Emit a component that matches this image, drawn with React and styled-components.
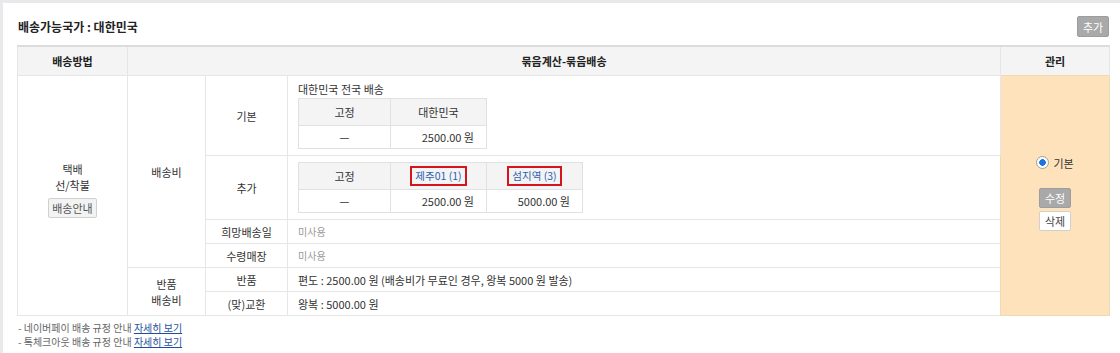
import React from "react"
import styled, { createGlobalStyle } from "styled-components"

const GlobalStyle = createGlobalStyle`
  html, body {
    margin: 0;
    padding: 0;
    background: #e8e9eb;
  }
  body {
    font-family: "Noto Sans CJK KR", "Noto Sans", sans-serif;
    font-size: 11px;
    color: #333;
  }
`

const Page = styled.div`
  padding: 3px 0 0 3px;
  background: #e8e9eb;
`

const Panel = styled.div`
  background: #fff;
  padding: 13px 11px 12px 14px;
  min-height: 330px;
`

const TopBar = styled.div`
  display: flex;
  justify-content: space-between;
  align-items: center;
  height: 21px;
  margin-bottom: 8px;
`

const Title = styled.h3`
  margin: 0;
  padding-left: 1px;
  font-size: 12px;
  font-weight: 700;
  color: #222;
`

const GrayButton = styled.button`
  width: 32px;
  height: ${(p) => p.h || 21}px;
  padding: 0;
  border: 1px solid #9d9d9d;
  border-radius: 2px;
  background: #a9a9a9;
  color: #fff;
  font-family: inherit;
  font-size: 11px;
`

const WhiteButton = styled.button`
  width: ${(p) => p.w || 32}px;
  height: 20px;
  margin-top: ${(p) => p.mt || 0}px;
  padding: 0;
  border: 1px solid #d0d0d0;
  border-radius: 2px;
  background: ${(p) => p.bg || "#fff"};
  color: ${(p) => p.fg || "#444"};
  font-family: inherit;
  font-size: 11px;
`

const Table = styled.table`
  width: 1092px;
  border-collapse: collapse;
  table-layout: fixed;
  border-top: 2px solid #dcdcdc;
  border-bottom: 1px solid #dcdcdc;
`

const Th = styled.th`
  height: 28px;
  padding: 0;
  background: #f4f4f4;
  border-left: 1px solid #e6e6e6;
  border-right: 1px solid #e6e6e6;
  font-weight: 700;
  color: #222;
  font-size: 11px;
  text-align: center;
`

const Td = styled.td`
  height: 23px;
  padding: ${(p) => (p.left ? "0 10px" : "0")};
  padding-bottom: ${(p) => p.pb || 0}px;
  border: 1px solid #e6e6e6;
  text-align: ${(p) => (p.left ? "left" : "center")};
  vertical-align: middle;
  line-height: 16px;
  color: ${(p) => (p.muted ? "#999" : "#333")};
  font-size: ${(p) => (p.muted ? "10px" : "11px")};
`

const ManageCell = styled.td`
  padding: 0 0 6px;
  border: 1px solid #f2d9b5;
  background: #fee2bb;
  text-align: center;
  vertical-align: middle;
`

const ContentCell = styled.td`
  padding: 6px 10px;
  border: 1px solid #e6e6e6;
  vertical-align: top;
  line-height: 14px;
`

const Caption = styled.div`
  margin: 0 0 2px;
  color: #333;
`

const InnerTable = styled.table`
  border-collapse: collapse;
  table-layout: fixed;
  border: 1px solid #dcdcdc;
`

const InnerTh = styled.th`
  height: 26px;
  padding: 0;
  background: #f4f4f4;
  border: 1px solid #e1e1e1;
  font-weight: 400;
  color: #333;
  text-align: center;
  line-height: 16px;
`

const InnerTd = styled.td`
  height: 22px;
  padding: ${(p) => (p.num ? "0 12px 0 0" : "0")};
  border: 1px solid #e1e1e1;
  text-align: ${(p) => (p.num ? "right" : "center")};
`

const MarkedLink = styled.span`
  display: inline-block;
  vertical-align: middle;
  padding: 0 3px;
  line-height: 16px;
  font-size: 10.5px;
  border: 2px solid #d6141d;
  color: #2b5fb3;
`

const StackLines = styled.div`
  line-height: 16px;
  color: #333;
`

const ManageBox = styled.div`
  display: flex;
  flex-direction: column;
  align-items: center;
`

const RadioLabel = styled.label`
  display: flex;
  align-items: center;
  gap: 4px;
  margin-bottom: 17px;
  color: #333;
`

const RadioDot = styled.span`
  width: 11px;
  height: 11px;
  border-radius: 50%;
  border: 1px solid #a0a0a0;
  background: radial-gradient(circle, #1d74e0 0 3px, #fff 3.6px);
`

const ButtonStack = styled.div`
  display: flex;
  flex-direction: column;
  gap: 3px;
`

const Notes = styled.div`
  margin-top: 5px;
  padding-left: 1px;
  line-height: 14px;
  font-size: 10px;
  color: #666;
`

const NoteLink = styled.a`
  color: #1f4f9e;
  text-decoration: underline;
`

export default function App() {
  return (
    <Page>
      <GlobalStyle />
      <Panel>
        <TopBar>
          <Title>배송가능국가 : 대한민국</Title>
          <GrayButton>추가</GrayButton>
        </TopBar>

        <Table>
          <colgroup>
            <col style={{ width: 110 }} />
            <col style={{ width: 78 }} />
            <col style={{ width: 82 }} />
            <col style={{ width: 713 }} />
            <col style={{ width: 109 }} />
          </colgroup>
          <thead>
            <tr>
              <Th>배송방법</Th>
              <Th colSpan={3}>묶음계산-묶음배송</Th>
              <Th>관리</Th>
            </tr>
          </thead>
          <tbody>
            <tr>
              <Td rowSpan={6} pb={12}>
                <StackLines>
                  택배
                  <br />
                  선/착불
                </StackLines>
                <WhiteButton w={49} mt={5} bg="#f3f3f3" fg="#555">배송안내</WhiteButton>
              </Td>
              <Td rowSpan={4}>배송비</Td>
              <Td>기본</Td>
              <ContentCell>
                <Caption>대한민국 전국 배송</Caption>
                <InnerTable>
                  <colgroup>
                    <col style={{ width: 92 }} />
                    <col style={{ width: 96 }} />
                  </colgroup>
                  <thead>
                    <tr>
                      <InnerTh>고정</InnerTh>
                      <InnerTh>대한민국</InnerTh>
                    </tr>
                  </thead>
                  <tbody>
                    <tr>
                      <InnerTd>—</InnerTd>
                      <InnerTd num>2500.00 원</InnerTd>
                    </tr>
                  </tbody>
                </InnerTable>
              </ContentCell>
              <ManageCell rowSpan={6}>
                <ManageBox>
                  <RadioLabel>
                    <RadioDot />
                    기본
                  </RadioLabel>
                  <ButtonStack>
                    <GrayButton h={20}>수정</GrayButton>
                    <WhiteButton>삭제</WhiteButton>
                  </ButtonStack>
                </ManageBox>
              </ManageCell>
            </tr>
            <tr>
              <Td>추가</Td>
              <ContentCell>
                <InnerTable>
                  <colgroup>
                    <col style={{ width: 92 }} />
                    <col style={{ width: 96 }} />
                    <col style={{ width: 96 }} />
                  </colgroup>
                  <thead>
                    <tr>
                      <InnerTh>고정</InnerTh>
                      <InnerTh>
                        <MarkedLink>제주01 (1)</MarkedLink>
                      </InnerTh>
                      <InnerTh>
                        <MarkedLink>섬지역 (3)</MarkedLink>
                      </InnerTh>
                    </tr>
                  </thead>
                  <tbody>
                    <tr>
                      <InnerTd>—</InnerTd>
                      <InnerTd num>2500.00 원</InnerTd>
                      <InnerTd num>5000.00 원</InnerTd>
                    </tr>
                  </tbody>
                </InnerTable>
              </ContentCell>
            </tr>
            <tr>
              <Td>희망배송일</Td>
              <Td left muted>미사용</Td>
            </tr>
            <tr>
              <Td>수령매장</Td>
              <Td left muted>미사용</Td>
            </tr>
            <tr>
              <Td rowSpan={2}>
                <StackLines>
                  반품
                  <br />
                  배송비
                </StackLines>
              </Td>
              <Td>반품</Td>
              <Td left>편도 : 2500.00 원 (배송비가 무료인 경우, 왕복 5000 원 발송)</Td>
            </tr>
            <tr>
              <Td>(맞)교환</Td>
              <Td left>왕복 : 5000.00 원</Td>
            </tr>
          </tbody>
        </Table>

        <Notes>
          <div>
            - 네이버페이 배송 규정 안내 <NoteLink>자세히 보기</NoteLink>
          </div>
          <div>
            - 톡체크아웃 배송 규정 안내 <NoteLink>자세히 보기</NoteLink>
          </div>
        </Notes>
      </Panel>
    </Page>
  )
}
